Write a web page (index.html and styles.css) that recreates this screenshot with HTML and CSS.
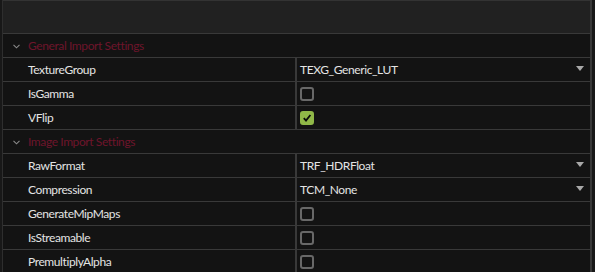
FILE: index.html
```html
<!DOCTYPE html>
<html lang="en">
  <head>
    <meta charset="UTF-8" />
    <title>Texture Import Settings</title>
    <link rel="stylesheet" href="styles.css">
  </head>
  <body>
    <div class="panel">
      <div class="toolbar"></div>

      <div class="section">
        <svg class="chevron" width="7" height="5" viewBox="0 0 7 5"><path d="M0.5 0.8 L3.5 3.8 L6.5 0.8" fill="none" stroke="#8a8a8a" stroke-width="1.1"/></svg>
        <span>General Import Settings</span>
      </div>
      <div class="row">
        <div class="label">TextureGroup</div>
        <div class="value combo">TEXG_Generic_LUT<span class="arrow"></span></div>
      </div>
      <div class="row">
        <div class="label">IsGamma</div>
        <div class="value"><span class="check"></span></div>
      </div>
      <div class="row">
        <div class="label">VFlip</div>
        <div class="value">
          <span class="check checked">
            <svg width="10" height="10" viewBox="0 0 10 10"><path d="M1.8 5.2 L4 7.6 L8.4 2" fill="none" stroke="#0b0b0b" stroke-width="1.8"/></svg>
          </span>
        </div>
      </div>

      <div class="section">
        <svg class="chevron" width="7" height="5" viewBox="0 0 7 5"><path d="M0.5 0.8 L3.5 3.8 L6.5 0.8" fill="none" stroke="#8a8a8a" stroke-width="1.1"/></svg>
        <span>Image Import Settings</span>
      </div>
      <div class="row">
        <div class="label">RawFormat</div>
        <div class="value combo">TRF_HDRFloat<span class="arrow"></span></div>
      </div>
      <div class="row">
        <div class="label">Compression</div>
        <div class="value combo">TCM_None<span class="arrow"></span></div>
      </div>
      <div class="row">
        <div class="label">GenerateMipMaps</div>
        <div class="value"><span class="check"></span></div>
      </div>
      <div class="row">
        <div class="label">IsStreamable</div>
        <div class="value"><span class="check"></span></div>
      </div>
      <div class="row">
        <div class="label">PremultiplyAlpha</div>
        <div class="value"><span class="check"></span></div>
      </div>
    </div>
  </body>
</html>
```

FILE: styles.css
```css
* {
  box-sizing: border-box;
}

body {
  margin: 0;
  background: #181818;
  font-family: Lato, "Open Sans", sans-serif;
  font-size: 12px;
  letter-spacing: -0.4px;
  color: #e4e4e4;
  height: 272px;
  overflow: hidden;
}

.panel {
  margin: 0 3px 0 2px;
  border-left: 1px solid #2e2e2e;
  border-right: 2px solid #383838;
  background: #131313;
  min-height: 272px;
}

.toolbar {
  height: 34px;
  background: #212121;
  border-top: 1px solid #333;
  border-bottom: 1px solid #393939;
}

.section {
  height: 24px;
  display: flex;
  align-items: center;
  border-bottom: 1px solid #393939;
  color: #6e152b;
}

.chevron {
  margin: 1px 0 0 10px;
  width: 7px;
  height: 5px;
}

.section span {
  margin-left: 8px;
}

.row {
  height: 24px;
  display: grid;
  grid-template-columns: 294px 1fr;
  border-bottom: 1px solid #393939;
}

.label {
  display: flex;
  align-items: center;
  padding-left: 25px;
  border-right: 2px solid #393939;
}

.value {
  display: flex;
  align-items: center;
  padding: 0 6px 0 3px;
}

.combo {
  justify-content: space-between;
}

.arrow {
  width: 0;
  height: 0;
  border-left: 4px solid transparent;
  border-right: 4px solid transparent;
  border-top: 5px solid #a8a8a8;
  margin-top: -2px;
}

.check {
  width: 14px;
  height: 14px;
  border: 2px solid #686868;
  border-radius: 3px;
  display: flex;
  align-items: center;
  justify-content: center;
}

.check.checked {
  background: #90b848;
  border-color: #90b848;
}
```
